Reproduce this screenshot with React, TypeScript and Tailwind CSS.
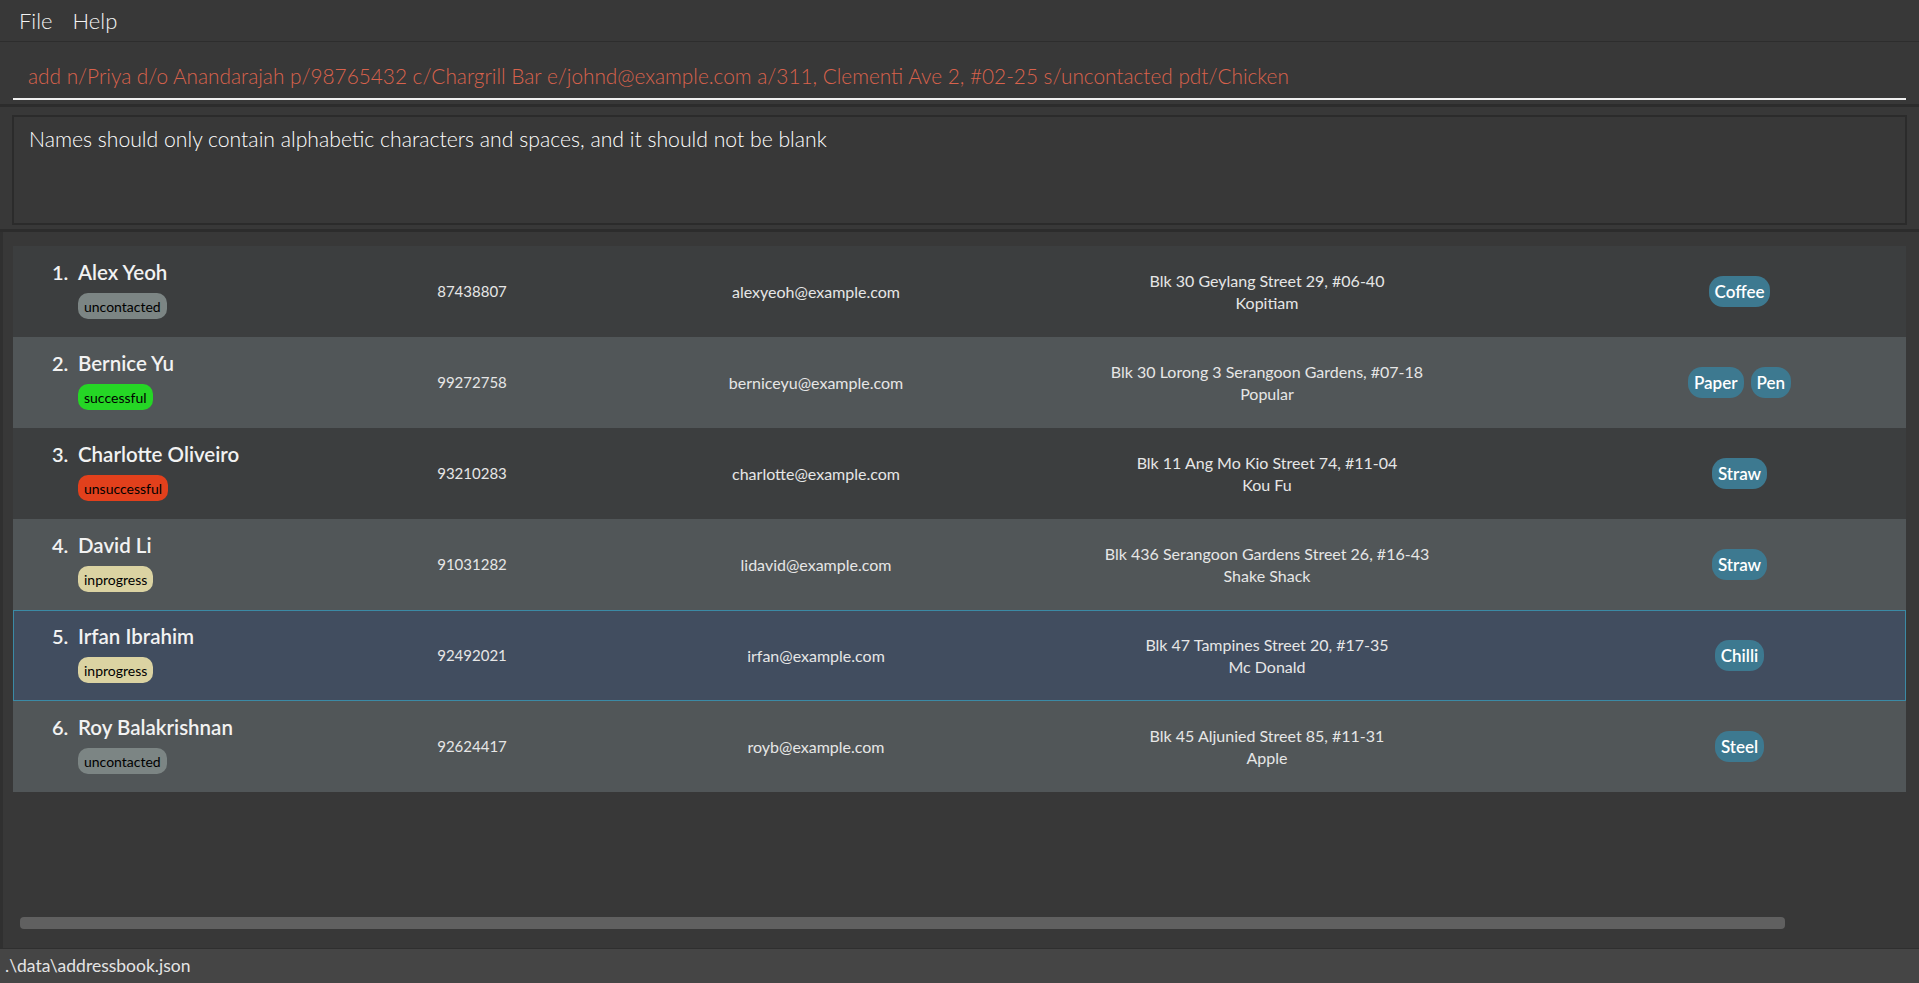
import React from 'react';

type Status = 'uncontacted' | 'successful' | 'unsuccessful' | 'inprogress';

interface Person {
  name: string;
  phone: string;
  email: string;
  address: string;
  company: string;
  status: Status;
  tags: string[];
}

const PEOPLE: Person[] = [
  { name: 'Alex Yeoh', phone: '87438807', email: 'alexyeoh@example.com', address: 'Blk 30 Geylang Street 29, #06-40', company: 'Kopitiam', status: 'uncontacted', tags: ['Coffee'] },
  { name: 'Bernice Yu', phone: '99272758', email: 'berniceyu@example.com', address: 'Blk 30 Lorong 3 Serangoon Gardens, #07-18', company: 'Popular', status: 'successful', tags: ['Paper', 'Pen'] },
  { name: 'Charlotte Oliveiro', phone: '93210283', email: 'charlotte@example.com', address: 'Blk 11 Ang Mo Kio Street 74, #11-04', company: 'Kou Fu', status: 'unsuccessful', tags: ['Straw'] },
  { name: 'David Li', phone: '91031282', email: 'lidavid@example.com', address: 'Blk 436 Serangoon Gardens Street 26, #16-43', company: 'Shake Shack', status: 'inprogress', tags: ['Straw'] },
  { name: 'Irfan Ibrahim', phone: '92492021', email: 'irfan@example.com', address: 'Blk 47 Tampines Street 20, #17-35', company: 'Mc Donald', status: 'inprogress', tags: ['Chilli'] },
  { name: 'Roy Balakrishnan', phone: '92624417', email: 'royb@example.com', address: 'Blk 45 Aljunied Street 85, #11-31', company: 'Apple', status: 'uncontacted', tags: ['Steel'] },
];

const STATUS_STYLE: Record<Status, string> = {
  uncontacted: 'bg-[#7c8584]',
  successful: 'bg-[#25d625]',
  unsuccessful: 'bg-[#e2401c]',
  inprogress: 'bg-[#dbd3a2]',
};

const PersonRow = ({ person, index, selected }: { person: Person; index: number; selected: boolean }) => {
  const rowBg = selected
    ? 'bg-[#414d5f] border border-[#3b8aa5]'
    : index % 2 === 0
      ? 'bg-[#3c3e3f] border border-transparent'
      : 'bg-[#515658] border border-transparent';

  return (
    <div className={`grid grid-cols-[320px_200px_488px_414px_1fr] items-center h-[91px] pl-[38px] text-[#e6e6e6] ${rowBg}`}>
      <div className="flex items-start pb-[4px]">
        <span className="w-[26px] text-[20px] leading-[24px] font-semibold text-[#f2f2f2]">{index + 1}.</span>
        <div className="flex flex-col items-start">
          <span className="text-[20.5px] leading-[24px] font-semibold text-[#f2f2f2]">{person.name}</span>
          <span className={`mt-[9px] h-[26px] px-[6px] rounded-[10px] flex items-center text-[14px] text-black ${STATUS_STYLE[person.status]}`}>
            {person.status}
          </span>
        </div>
      </div>
      <div className="text-center text-[15px]">{person.phone}</div>
      <div className="text-center text-[16px]">{person.email}</div>
      <div className="flex flex-col items-center text-[16px] leading-[22px]">
        <span>{person.address}</span>
        <span>{person.company}</span>
      </div>
      <div className="flex justify-center gap-[7px] pl-[100px]">
        {person.tags.map((t) => (
          <span key={t} className="h-[31px] px-[6px] rounded-[14px] bg-[#3d7990] flex items-center text-[17px] font-semibold text-white">
            {t}
          </span>
        ))}
      </div>
    </div>
  );
};

export default function App() {
  return (
    <div className="w-[1919px] h-[983px] flex flex-col bg-[#383838] font-['Lato',sans-serif] overflow-hidden">
      {/* menu bar */}
      <div className="h-[42px] flex items-center gap-[20px] px-[19px] border-b border-[#2d2d2d] text-[22px] font-light text-[#f4f4f4]">
        <span>File</span>
        <span>Help</span>
      </div>

      {/* command box */}
      <div className="h-[65px] px-[13px] pt-[15px] border-b-[3px] border-[#2c2c2c]">
        <div className="h-[43px] flex items-center pl-[15px] pb-[4px] border-b-2 border-[#f0f0f0] text-[20.8px] font-light text-[#d8624c]">
          add n/Priya d/o Anandarajah p/98765432 c/Chargrill Bar e/johnd@example.com a/311, Clementi Ave 2, #02-25 s/uncontacted pdt/Chicken
        </div>
      </div>

      {/* result display */}
      <div className="h-[125px] px-[12px] pt-[8px] pb-[4px] border-b-[3px] border-[#2c2c2c]">
        <div className="h-full border-2 border-[#2b2b2b] px-[15px] pt-[7px] text-[21.2px] font-light text-white">
          Names should only contain alphabetic characters and spaces, and it should not be blank
        </div>
      </div>

      {/* person list */}
      <div className="flex-1 flex flex-col pl-[10px] pr-[13px] pt-[14px] border-l-[3px] border-[#303030]">
        <div className="flex flex-col">
          {PEOPLE.map((p, i) => (
            <PersonRow key={p.name} person={p} index={i} selected={i === 4} />
          ))}
        </div>
        <div className="flex-1" />
        <div className="h-[12px] w-[1765px] ml-[7px] mb-[19px] rounded-[4px] bg-[#606060]" />
      </div>

      {/* status bar */}
      <div className="h-[35px] flex items-center px-[5px] bg-[#454545] border-t border-[#2f2f2f] text-[17.5px] text-[#e4e4e4]">
        .\data\addressbook.json
      </div>
    </div>
  );
}
